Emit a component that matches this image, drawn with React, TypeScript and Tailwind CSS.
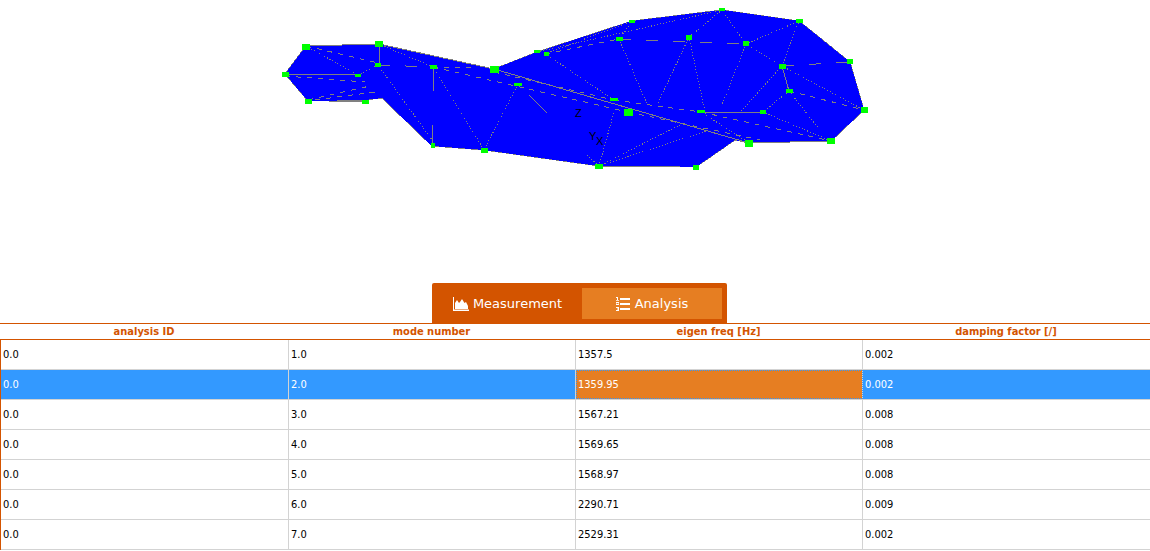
const outline =
  "285,74 306,46 379,44 494,69 537,52 632,21 722,10 799,21 850,62 864,110 831,141 749,143 735,140 696,167 599,166 484,150 432,146 382,98 365,100 308,101";

const solid = [
  "306,46 379,44", "379,44 494,69", "379,44 379,65", "285,74 358,74", "433,67 433,91", "432,125 432,146",
  "529,95 547,113", "494,69 749,143", "701,112 763,112", "782,66 789,91", "599,166 680,166", "749,143 831,141",
  "329,101 363,101",
];
const dashed = [
  "285,76 365,82", "308,100 370,86", "315,100 375,92", "306,46 378,63", "433,67 628,112",
  "494,72 614,100", "614,100 701,112", "701,112 831,141", "545,54 619,39", "789,91 864,110", "628,112 760,140",
  "433,67 475,68",
];
const longDashed = ["378,65 433,67", "619,39 746,44", "782,66 850,62"];
const dotted = [
  "306,46 358,75", "358,75 378,65", "379,44 433,67", "378,65 432,140", "433,67 484,150", "518,84 484,150",
  "545,54 632,21", "537,52 722,10", "632,21 619,39", "619,39 647,104", "689,37 722,10", "689,37 657,105",
  "689,37 705,112", "722,10 746,44", "746,44 799,21", "746,44 722,105", "746,44 782,66", "782,66 799,21",
  "782,66 864,110", "782,66 740,112", "789,91 763,112", "789,91 820,130", "763,112 831,141", "701,112 749,143",
  "599,166 614,112", "599,166 680,125", "599,166 710,130", "587,155 599,166", "550,57 614,100",
];

const nodes: [number, number, number, number][] = [
  [302, 44, 8, 6], [375, 41, 8, 6], [282, 72, 7, 5], [305, 99, 7, 5], [362, 100, 7, 4], [375, 63, 6, 4], [355, 74, 6, 3],
  [430, 65, 7, 4], [490, 66, 9, 7], [514, 83, 8, 3], [431, 143, 4, 5], [481, 148, 7, 5], [534, 50, 6, 3], [544, 52, 5, 4],
  [629, 20, 6, 3], [616, 37, 7, 4], [719, 8, 6, 3], [796, 19, 7, 4], [686, 35, 6, 5], [743, 41, 6, 5], [779, 64, 7, 5],
  [847, 59, 6, 5], [786, 89, 7, 4], [861, 107, 7, 6], [760, 110, 6, 4], [697, 110, 8, 3], [610, 98, 8, 3], [624, 109, 9, 7],
  [745, 140, 8, 7], [827, 138, 8, 6], [595, 164, 8, 5], [693, 165, 6, 5],
];

const line = (s: string) => {
  const [a, b] = s.split(" ");
  const [x1, y1] = a.split(",");
  const [x2, y2] = b.split(",");
  return { x1, y1, x2, y2 };
};

const rows = [
  ["0.0", "1.0", "1357.5", "0.002"],
  ["0.0", "2.0", "1359.95", "0.002"],
  ["0.0", "3.0", "1567.21", "0.008"],
  ["0.0", "4.0", "1569.65", "0.008"],
  ["0.0", "5.0", "1568.97", "0.008"],
  ["0.0", "6.0", "2290.71", "0.009"],
  ["0.0", "7.0", "2529.31", "0.002"],
];
const headers = ["analysis ID", "mode number", "eigen freq [Hz]", "damping factor [/]"];

function AreaIcon() {
  return (
    <svg width="16" height="14" viewBox="0 0 16 14" fill="white" className="shrink-0">
      <path d="M0 0h1v12.5h15V14H0z" />
      <path d="M2 12V6l2-3 2 3 1-1 2-3 2.5 4 1.5-1 2 4v3z" />
    </svg>
  );
}

function ListIcon() {
  return (
    <svg width="14" height="14" viewBox="0 0 14 14" fill="white" className="shrink-0">
      <path d="M4 1h10v2H4zM4 6h10v2H4zM4 11h10v2H4z" />
      <path d="M0 0h2v1H0zM1 1h1v2H1zM0 3h3v.8H0zM0 5h3v1H1v.5h2V8H0V7h2v-.5H0zM0 10h3v4H0v-1h2v-.5H1v-1h1V11H0z" />
    </svg>
  );
}

export default function App() {
  return (
    <div className="w-[1150px] h-[551px] bg-white overflow-hidden flex flex-col font-['DejaVu_Sans_Condensed','DejaVu_Sans',sans-serif]">
      <div className="h-[283px] shrink-0">
        <svg width="1150" height="283" viewBox="0 0 1150 283" shapeRendering="crispEdges" fill="none">
          <polygon points={outline} fill="#0000ff" stroke="#808080" strokeWidth="1" />
          <polygon points={outline} fill="#0000ff" />
          {solid.map((s) => (
            <line key={s} {...line(s)} stroke="#808080" strokeWidth="1" />
          ))}
          {dashed.map((s) => (
            <line key={s} {...line(s)} stroke="#808080" strokeWidth="1" strokeDasharray="5 6" />
          ))}
          {longDashed.map((s) => (
            <line key={s} {...line(s)} stroke="#808080" strokeWidth="1" strokeDasharray="12 15" />
          ))}
          {dotted.map((s) => (
            <line key={s} {...line(s)} stroke="#808080" strokeWidth="1" strokeDasharray="1 2" />
          ))}
          {nodes.map(([x, y, w, h]) => (
            <rect key={`${x}-${y}`} x={x} y={y} width={w} height={h} fill="#00ff00" />
          ))}
          <text x="575" y="117" fontSize="11" fill="#000" fontFamily="Liberation Sans">Z</text>
          <text x="589" y="140" fontSize="11" fill="#000" fontFamily="Liberation Sans">Y</text>
          <text x="596" y="145" fontSize="11" fill="#000" fontFamily="Liberation Sans">X</text>
        </svg>
      </div>
      <div className="h-10 shrink-0 pl-[432px]">
        <div className="w-[295px] h-10 bg-[#d35400] rounded-t-[2px] pt-[5px] px-[5px] flex font-['DejaVu_Sans',sans-serif] text-[13px] text-white">
          <div className="w-[145px] h-[31px] pr-1 flex items-center justify-center gap-1">
            <AreaIcon />
            <span>Measurement</span>
          </div>
          <div className="w-[140px] h-[31px] bg-[#e67e22] flex items-center justify-center gap-[5px]">
            <ListIcon />
            <span>Analysis</span>
          </div>
        </div>
      </div>
      <div className="border-t border-[#d35400]">
        <div className="grid grid-cols-[288px_287px_287px_288px] h-[16px] border-b border-[#d35400] items-center text-center text-[11px] font-bold text-[#d35400]">
          {headers.map((h) => (
            <div key={h} className="leading-[15px]">{h}</div>
          ))}
        </div>
        <div className="border-l border-[#d35400] w-[1150px]">
          {rows.map((r, i) => (
            <div
              key={i}
              className={`grid grid-cols-[288px_287px_287px_287px] h-[30px] border-b border-[#d3d3d3] text-[11px] ${
                i === 1 ? "bg-[#3399ff] text-white" : "text-black"
              }`}
            >
              {r.map((c, j) => (
                <div
                  key={j}
                  className={`flex items-center pl-[2px] pt-[1px] ${j < 3 ? "border-r border-[#d3d3d3]" : ""} ${
                    i === 1 && j === 2 ? "bg-[#e67e22] outline-1 -outline-offset-1 outline-dotted outline-[#3399ff]" : ""
                  }`}
                >
                  {c}
                </div>
              ))}
            </div>
          ))}
        </div>
      </div>
    </div>
  );
}
